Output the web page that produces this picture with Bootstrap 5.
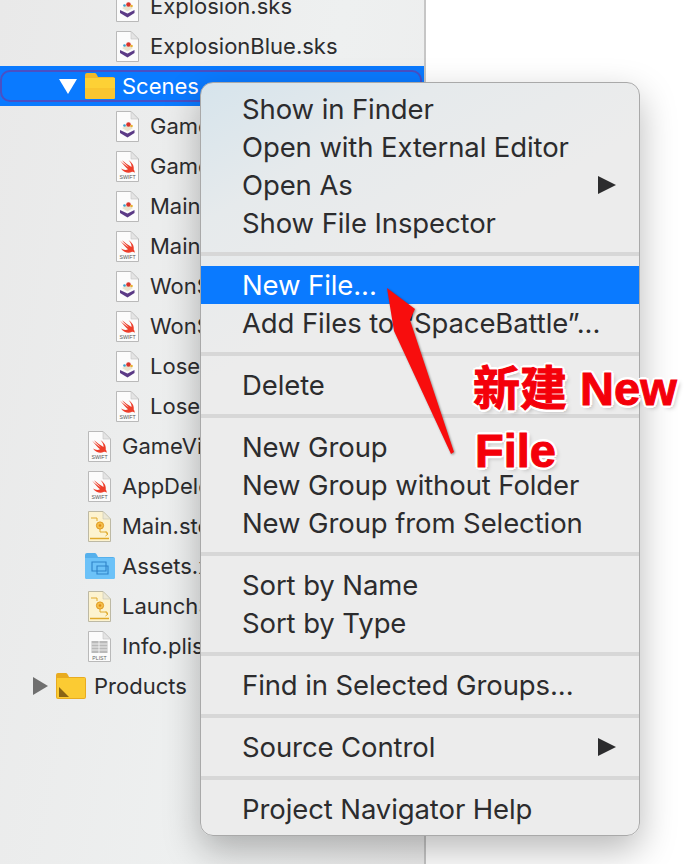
<!DOCTYPE html>
<html lang="en">
<head>
    <meta charset="UTF-8">
    <meta name="viewport" content="width=device-width, initial-scale=1.0">
    <title>Xcode navigator menu</title>
    <link href="https://cdn.jsdelivr.net/npm/bootstrap@5.3.3/dist/css/bootstrap.min.css" rel="stylesheet">
    <script src="https://cdn.jsdelivr.net/npm/bootstrap@5.3.3/dist/js/bootstrap.bundle.min.js"></script>
    <style>
        html, body { height: 864px; overflow: hidden; background: #fff; }
        body { position: relative; font-family: Inter, "Liberation Sans", sans-serif; color: #2c2c2e; }

        .navigator {
            width: 426px; height: 864px; overflow: hidden;
            background: linear-gradient(100deg, #e9e9e9, #eef0f0 60%, #ececec);
            border-right: 2px solid #c6c6c6;
        }
        .tree { margin-top: -14px; }
        .tree-row { height: 40px; font-size: 22px; white-space: nowrap; }
        .tree-row svg { flex: none; }
        .lvl-3 { padding-left: 116px; gap: 11px; }
        .lvl-2 { padding-left: 88px; gap: 11px; }
        .lvl-2 .folder-ico { margin-left: -3px; margin-right: -4px; }
        .tree-row.selected { background: #0a7aff; color: #fff; padding-left: 59px; gap: 8px; position: relative; }
        .tree-row.selected span { margin-left: -1px; }
        .tree-row.selected::after {
            content: ""; position: absolute; inset: 4px 2px 4px 0;
            border: 2px solid #4a50c4; border-radius: 10px;
        }
        .products-row { padding-left: 33px; gap: 8px; }

        .ctx-menu.dropdown-menu {
            display: block; position: absolute; left: 200px; top: 82px; width: 440px; height: 754px;
            padding: 7px 0; margin: 0; border: 1px solid #a9a9a9; border-radius: 13px;
            background: linear-gradient(150deg, #d6e4ec 0, #e6eaec 14%, #ececec 30%);
            box-shadow: 0 14px 36px rgba(0, 0, 0, .28);
        }
        .ctx-menu .dropdown-item {
            height: 38px; padding: 0 23px 0 41px; font-size: 27.500px; line-height: 38px;
            color: #2c2c2e; letter-spacing: -.1px;
        }
        .ctx-menu .dropdown-item.active { background: #0a7aff; color: #fff; }
        .ctx-menu .dropdown-divider { height: 4px; margin: 10px 0; border: 0; background: #d7d7d7; opacity: 1; }
        .sub-arrow { width: 0; height: 0; border-left: 18px solid #2c2c2e; border-top: 9.500px solid transparent; border-bottom: 9.500px solid transparent; }

        .note-arrow { position: absolute; z-index: 1001; left: 380px; top: 280px; filter: drop-shadow(1px 1px 1px rgba(0,0,0,.4)); }
        .note-text {
            position: absolute; z-index: 1001; font-family: "Liberation Sans", "Noto Sans CJK SC", sans-serif; font-weight: 700;
            font-size: 47px; line-height: 50px; color: #f4000a; white-space: nowrap;
            -webkit-text-stroke: 1px #f4000a;
            text-shadow: 3px 0 #fff, -3px 0 #fff, 0 3px #fff, 0 -3px #fff, 2px 2px #fff, -2px 2px #fff, 2px -2px #fff, -2px -2px #fff, 3px 3px 4px rgba(0,0,0,.25);
        }
        .note-new { left: 473px; top: 364px; }
        .note-file { left: 475px; top: 426px; }
    </style>
</head>
<body>

<svg width="0" height="0" class="position-absolute">
    <defs>
        <symbol id="doc" viewBox="0 0 23 31">
            <path d="M.5.5h14.500l7.500 7.500v22.500H.5z" fill="#fbfbfb" stroke="#b9b9b9"/>
            <path d="M15 .5V8h7.500z" fill="#e4e4e4" stroke="#c4c4c4" stroke-width=".6"/>
        </symbol>
        <symbol id="ico-sks" viewBox="0 0 23 31">
            <use href="#doc"/>
            <path d="M4 19l7.500 3.500 7-3.500v3l-7 4.500-7.500-4.500z" fill="#5b3a86"/>
            <path d="M6 17l5.500-3 5.500 3-5.500 3.500z" fill="#e8e4d0"/>
            <circle cx="12.500" cy="13.500" r="2.300" fill="#d8342c"/>
            <circle cx="8.500" cy="14.500" r="1.300" fill="#3da0c8"/>
            <circle cx="15.500" cy="15" r="1.300" fill="#e8b030"/>
        </symbol>
        <symbol id="ico-swift" viewBox="0 0 23 31">
            <use href="#doc"/>
            <path d="M4 9.500c3 3 6.500 5.500 9 7-2.500-2-5-4.700-7-7.200 3 2.500 6.500 5 9.500 6.700.3-2.300-1-4.700-3-6.800 3.500 2 6 5.800 5.200 9.300 1 1.300 1.200 2.700.8 3.300-.7-1-2-1.300-3-.8-2.800 1.300-7.500.8-10.500-3.500 2.300 1.500 5 1.800 7 .8C10 16.500 6.500 13 4 9.500z" fill="#ee3f2c"/>
            <text x="11.500" y="28" font-size="5.200" font-family="Liberation Sans, sans-serif" text-anchor="middle" fill="#555">SWIFT</text>
        </symbol>
        <symbol id="ico-board" viewBox="0 0 23 31">
            <path d="M.5.5h14.500l7.500 7.500v22.500H.5z" fill="#fdf3cf" stroke="#bdb9a4"/>
            <path d="M15 .5V8h7.500z" fill="#ece8d6" stroke="#c8c4b0" stroke-width=".6"/>
            <path d="M3 7h6v3M12 16v5h7v2" fill="none" stroke="#e0a92c" stroke-width="1"/>
            <path d="M17.500 21l2.500 2-2.500 2" fill="none" stroke="#e0a92c" stroke-width="1"/>
            <circle cx="12" cy="14.500" r="3.600" fill="#f5c04a" stroke="#e09a20"/>
            <circle cx="12" cy="14.500" r="1.300" fill="#e08a18"/>
            <path d="M2 27.500h19" stroke="#e0a92c" stroke-width="1.500"/>
        </symbol>
        <symbol id="ico-plist" viewBox="0 0 23 31">
            <use href="#doc"/>
            <path d="M3.500 10h16v12h-16z" fill="#b9b9b9"/>
            <path d="M3.500 13h16M3.500 16h16M3.500 19h16M11 10v12" stroke="#f4f4f4" stroke-width=".9"/>
            <text x="11.500" y="28.500" font-size="5.200" font-family="Liberation Sans, sans-serif" text-anchor="middle" fill="#666">PLIST</text>
        </symbol>
        <symbol id="ico-folder" viewBox="0 0 30 26">
            <path d="M0 2q0-2 2-2h8q1 0 2 2l1 2h15q2 0 2 2v18q0 2-2 2H2q-2 0-2-2z" fill="#f2b92a"/>
            <path d="M0 5h30v19q0 2-2 2H2q-2 0-2-2z" fill="#fdd135"/>
            <path d="M0 15h30v9q0 2-2 2H2q-2 0-2-2z" fill="#f9c52f"/>
        </symbol>
        <symbol id="ico-products" viewBox="0 0 30 26">
            <path d="M0 2q0-2 2-2h8q1 0 2 2l1 2h15q2 0 2 2v18q0 2-2 2H2q-2 0-2-2z" fill="#e8ab20"/>
            <path d="M1 5h28v19q0 1-1 1H2q-1 0-1-1z" fill="#fbcb33"/>
            <path d="M3 14l10 10H3z" fill="#8a6414"/>
        </symbol>
        <symbol id="ico-assets" viewBox="0 0 30 26">
            <path d="M0 2q0-2 2-2h8q1 0 2 2l1 2h15q2 0 2 2v18q0 2-2 2H2q-2 0-2-2z" fill="#55b0ec"/>
            <path d="M0 5h30v19q0 2-2 2H2q-2 0-2-2z" fill="#6cc2f8"/>
            <path d="M7 9h14v9H7zM12 13h11v8H12z" fill="none" stroke="#2f83c8" stroke-width="1.100"/>
        </symbol>
    </defs>
</svg>

<!-- project navigator -->
<div class="navigator">
    <div class="tree" id="tree"></div>
</div>

<!-- context menu -->
<ul class="dropdown-menu ctx-menu" id="ctxMenu"></ul>

<!-- annotation on top of the screenshot -->
<svg class="note-arrow" width="80" height="180" viewBox="380 280 80 180">
    <path d="M387 288L415 309 410 320 454 452 451 454 394 331z" fill="#f80d0d"/>
</svg>
<div class="note-text note-new">新建 New</div>
<div class="note-text note-file">File</div>

<script>
    const files = [
        ["Explosion.sks", "sks", 3],
        ["ExplosionBlue.sks", "sks", 3],
        ["Scenes", "open", 0],
        ["GameScene.sks", "sks", 3],
        ["GameScene.swift", "swift", 3],
        ["MainScene.sks", "sks", 3],
        ["MainScene.swift", "swift", 3],
        ["WonScene.sks", "sks", 3],
        ["WonScene.swift", "swift", 3],
        ["LoseScene.sks", "sks", 3],
        ["LoseScene.swift", "swift", 3],
        ["GameViewController.swift", "swift", 2],
        ["AppDelegate.swift", "swift", 2],
        ["Main.storyboard", "board", 2],
        ["Assets.xcassets", "assets", 2],
        ["LaunchScreen.storyboard", "board", 2],
        ["Info.plist", "plist", 2],
        ["Products", "products", 1]
    ];

    const tree = document.getElementById("tree");
    files.forEach(([name, kind, level]) => {
        const row = document.createElement("div");
        row.className = "tree-row d-flex align-items-center";
        if (kind === "open") {
            row.classList.add("selected");
            row.innerHTML = `<svg width="18" height="15" viewBox="0 0 18 15"><path d="M0 0h18L9 15z" fill="#fff"/></svg>
                <svg width="30" height="26" class="ms-0"><use href="#ico-folder"/></svg><span>${name}</span>`;
        } else if (kind === "products") {
            row.classList.add("products-row");
            row.innerHTML = `<svg width="15" height="18" viewBox="0 0 15 18"><path d="M0 0l15 9L0 18z" fill="#6f6f6f"/></svg>
                <svg width="30" height="26"><use href="#ico-products"/></svg><span>${name}</span>`;
        } else if (kind === "assets") {
            row.classList.add("lvl-2");
            row.innerHTML = `<svg width="30" height="26" class="folder-ico"><use href="#ico-assets"/></svg><span>${name}</span>`;
        } else {
            row.classList.add("lvl-" + level);
            row.innerHTML = `<svg width="23" height="31"><use href="#ico-${kind}"/></svg><span>${name}</span>`;
        }
        tree.appendChild(row);
    });

    const menu = [
        ["Show in Finder", "Open with External Editor", "Open As>", "Show File Inspector"],
        ["*New File...", "Add Files to “SpaceBattle”..."],
        ["Delete"],
        ["New Group", "New Group without Folder", "New Group from Selection"],
        ["Sort by Name", "Sort by Type"],
        ["Find in Selected Groups..."],
        ["Source Control>"],
        ["Project Navigator Help"]
    ];

    const ctxMenu = document.getElementById("ctxMenu");
    menu.forEach((group, i) => {
        if (i > 0) {
            ctxMenu.insertAdjacentHTML("beforeend", '<li><hr class="dropdown-divider"></li>');
        }
        group.forEach(label => {
            const active = label.startsWith("*");
            const sub = label.endsWith(">");
            const text = label.replace("*", "").replace(">", "");
            ctxMenu.insertAdjacentHTML("beforeend",
                `<li><a class="dropdown-item d-flex justify-content-between align-items-center${active ? " active" : ""}" href="#">
                    <span>${text}</span>${sub ? '<span class="sub-arrow"></span>' : ""}</a></li>`);
        });
    });
</script>

</body>
</html>
